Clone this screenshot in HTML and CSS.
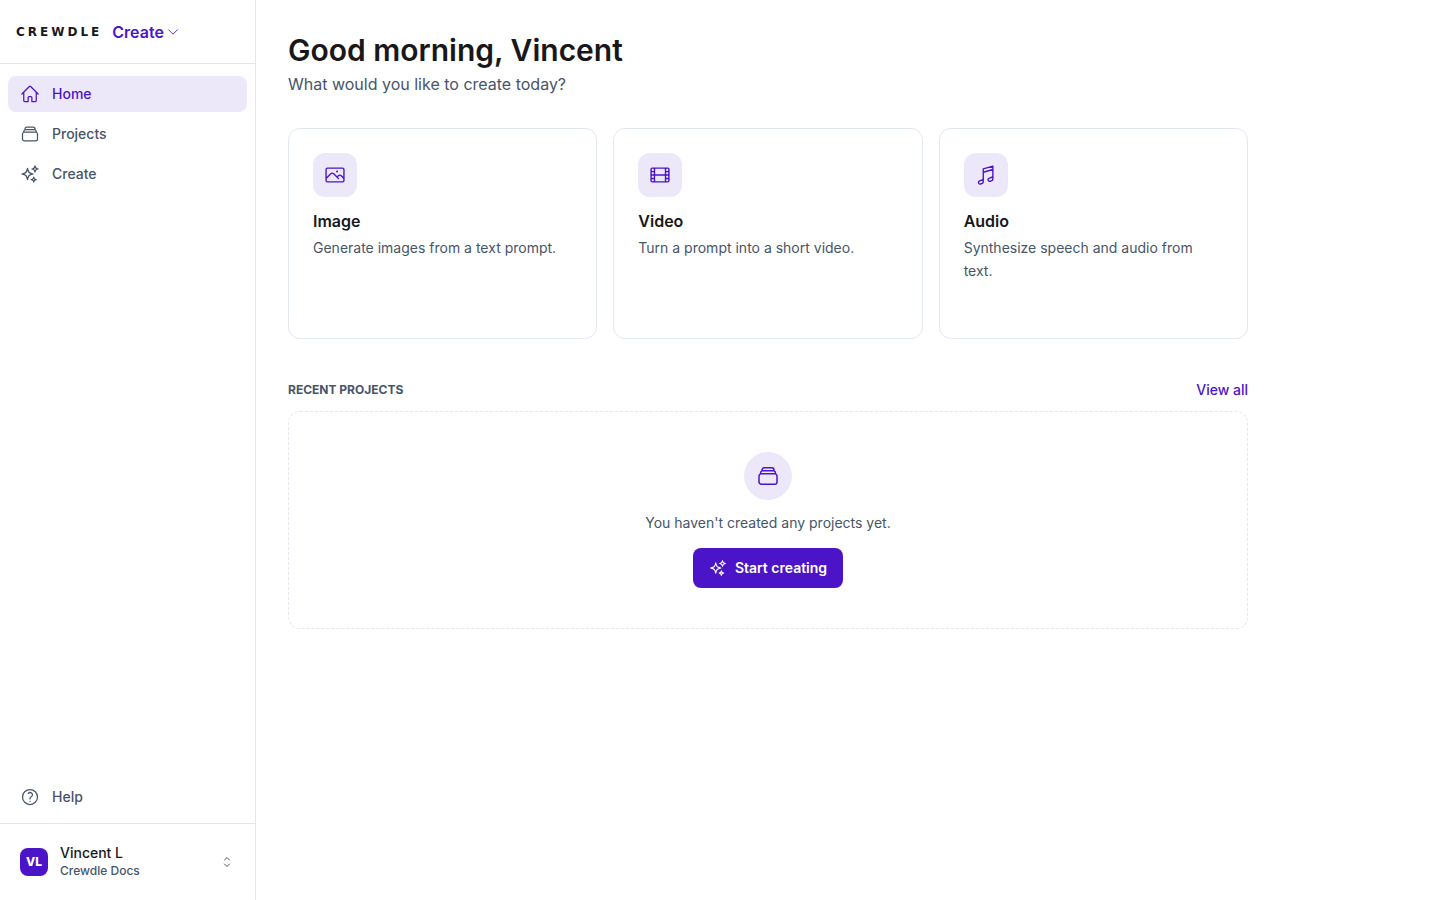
FILE: index.html
```html
<!DOCTYPE html>
<html lang="en">
<head>
<meta charset="utf-8">
<meta name="viewport" content="width=device-width, initial-scale=1">
<title>Crewdle Create</title>
<link rel="stylesheet" href="styles.css">
</head>
<body>

<svg class="sprite" aria-hidden="true">
  <symbol id="sparkles" viewBox="0 0 24 24">
    <path d="M9.813 15.904 9 18.75l-.813-2.846a4.5 4.5 0 0 0-3.09-3.09L2.25 12l2.846-.813a4.5 4.5 0 0 0 3.09-3.09L9 5.25l.813 2.846a4.5 4.5 0 0 0 3.09 3.09L15.75 12l-2.846.813a4.5 4.5 0 0 0-3.09 3.09ZM18.259 8.715 18 9.75l-.259-1.035a3.375 3.375 0 0 0-2.455-2.456L14.25 6l1.036-.259a3.375 3.375 0 0 0 2.455-2.456L18 2.25l.259 1.035a3.375 3.375 0 0 0 2.456 2.456L21.75 6l-1.035.259a3.375 3.375 0 0 0-2.456 2.456ZM16.894 20.567 16.5 21.75l-.394-1.183a2.25 2.25 0 0 0-1.423-1.423L13.5 18.75l1.183-.394a2.25 2.25 0 0 0 1.423-1.423l.394-1.183.394 1.183a2.25 2.25 0 0 0 1.423 1.423l1.183.394-1.183.394a2.25 2.25 0 0 0-1.423 1.423Z"/>
  </symbol>
  <symbol id="stack" viewBox="0 0 24 24">
    <path d="M6 6.878V6a2.25 2.25 0 0 1 2.25-2.25h7.5A2.25 2.25 0 0 1 18 6v.878m-12 0c.235-.083.487-.128.75-.128h10.5c.263 0 .515.045.75.128m-12 0A2.25 2.25 0 0 0 4.5 9v.878m13.5-3A2.25 2.25 0 0 1 19.5 9v.878m0 0a2.246 2.246 0 0 0-.75-.128H5.25c-.263 0-.515.045-.75.128m15 0A2.25 2.25 0 0 1 21 12v6a2.25 2.25 0 0 1-2.25 2.25H5.25A2.25 2.25 0 0 1 3 18v-6c0-.98.626-1.813 1.5-2.122"/>
  </symbol>
</svg>

<div class="app">
  <aside class="sidebar">
    <header class="brand">
      <button class="brand-button" type="button">
        <span class="wordmark">CREWDLE</span>
        <span class="product">Create</span>
        <svg class="icon chevron" viewBox="0 0 24 24"><path d="m19.5 8.25-7.5 7.5-7.5-7.5"/></svg>
      </button>
    </header>

    <nav class="nav">
      <a class="nav-item active" href="#home">
        <svg class="icon" viewBox="0 0 24 24"><path d="m2.25 12 8.954-8.955c.44-.439 1.152-.439 1.591 0L21.75 12M4.5 9.75v10.125c0 .621.504 1.125 1.125 1.125H9.75v-4.875c0-.621.504-1.125 1.125-1.125h2.25c.621 0 1.125.504 1.125 1.125V21h4.125c.621 0 1.125-.504 1.125-1.125V9.75"/></svg>
        Home
      </a>
      <a class="nav-item" href="#projects">
        <svg class="icon"><use href="#stack"/></svg>
        Projects
      </a>
      <a class="nav-item" href="#create">
        <svg class="icon"><use href="#sparkles"/></svg>
        Create
      </a>
      <a class="nav-item help" href="#help">
        <svg class="icon" viewBox="0 0 24 24"><path d="M9.879 7.519c1.171-1.025 3.071-1.025 4.242 0 1.172 1.025 1.172 2.687 0 3.712-.203.179-.43.326-.67.442-.745.361-1.45.999-1.45 1.827v.75M21 12a9 9 0 1 1-18 0 9 9 0 0 1 18 0Zm-9 5.25h.008v.008H12v-.008Z"/></svg>
        Help
      </a>
    </nav>

    <footer class="account">
      <button class="account-button" type="button">
        <span class="avatar">VL</span>
        <span class="account-text">
          <span class="account-name">Vincent L</span>
          <span class="account-org">Crewdle Docs</span>
        </span>
        <svg class="icon updown" viewBox="0 0 24 24"><path d="M8.25 15 12 18.75 15.75 15m-7.5-6L12 5.25 15.75 9"/></svg>
      </button>
    </footer>
  </aside>

  <main class="main">
    <div class="content">
      <h1>Good morning, Vincent</h1>
      <p class="subtitle">What would you like to create today?</p>

      <div class="cards">
        <a class="card" href="#image">
          <span class="card-icon">
            <svg class="icon" viewBox="0 0 24 24"><path d="m2.25 15.75 5.159-5.159a2.25 2.25 0 0 1 3.182 0l5.159 5.159m-1.5-1.5 1.409-1.409a2.25 2.25 0 0 1 3.182 0l2.909 2.909m-18 3.75h16.5a1.5 1.5 0 0 0 1.5-1.5V6a1.5 1.5 0 0 0-1.5-1.5H3.75A1.5 1.5 0 0 0 2.25 6v12a1.5 1.5 0 0 0 1.5 1.5Zm10.5-11.25h.008v.008h-.008V8.25Zm.375 0a.375.375 0 1 1-.75 0 .375.375 0 0 1 .75 0Z"/></svg>
          </span>
          <h2>Image</h2>
          <p>Generate images from a text prompt.</p>
        </a>
        <a class="card" href="#video">
          <span class="card-icon">
            <svg class="icon" viewBox="0 0 24 24"><path d="M3.375 19.5h17.25m-17.25 0a1.125 1.125 0 0 1-1.125-1.125M3.375 19.5h1.5C5.496 19.5 6 18.996 6 18.375m-3.75 0V5.625m0 12.75v-1.5c0-.621.504-1.125 1.125-1.125m18.375 2.625V5.625m0 12.75c0 .621-.504 1.125-1.125 1.125m1.125-1.125v-1.5c0-.621-.504-1.125-1.125-1.125m0 3.75h-1.5A1.125 1.125 0 0 1 18 18.375M20.625 4.5H3.375m17.25 0c.621 0 1.125.504 1.125 1.125M20.625 4.5h-1.5C18.504 4.5 18 5.004 18 5.625m3.75 0v1.5c0 .621-.504 1.125-1.125 1.125M3.375 4.5c-.621 0-1.125.504-1.125 1.125M3.375 4.5h1.5C5.496 4.5 6 5.004 6 5.625m-3.75 0v1.5c0 .621.504 1.125 1.125 1.125m0 0h1.5m-1.5 0c-.621 0-1.125.504-1.125 1.125v1.5c0 .621.504 1.125 1.125 1.125m1.5-3.75C5.496 8.25 6 7.746 6 7.125v-1.5M4.875 8.25C5.496 8.25 6 8.754 6 9.375v1.5m0-5.25v5.25m0-5.25C6 5.004 6.504 4.5 7.125 4.5h9.75c.621 0 1.125.504 1.125 1.125m1.125 2.625h1.5m-1.5 0A1.125 1.125 0 0 1 18 7.125v-1.5m1.125 2.625c-.621 0-1.125.504-1.125 1.125v1.5m2.625-2.625c.621 0 1.125.504 1.125 1.125v1.5c0 .621-.504 1.125-1.125 1.125M18 5.625v5.25M7.125 12h9.75m-9.75 0A1.125 1.125 0 0 1 6 10.875M7.125 12C6.504 12 6 12.504 6 13.125m0-2.25C6 11.496 5.496 12 4.875 12M18 10.875c0 .621-.504 1.125-1.125 1.125M18 10.875c0 .621.504 1.125 1.125 1.125m-2.25 0c.621 0 1.125.504 1.125 1.125m-12 5.25v-5.25m0 5.25c0 .621.504 1.125 1.125 1.125h9.75c.621 0 1.125-.504 1.125-1.125m-12 0v-1.5c0-.621-.504-1.125-1.125-1.125M18 18.375v-5.25m0 5.25v-1.5c0-.621.504-1.125 1.125-1.125M18 13.125v1.5c0 .621.504 1.125 1.125 1.125M18 13.125c0-.621.504-1.125 1.125-1.125M6 13.125v1.5c0 .621-.504 1.125-1.125 1.125M6 13.125C6 12.504 5.496 12 4.875 12m-1.5 0h1.5m-1.5 0c-.621 0-1.125.504-1.125 1.125v1.5c0 .621.504 1.125 1.125 1.125M19.125 12h1.5m0 0c.621 0 1.125.504 1.125 1.125v1.5c0 .621-.504 1.125-1.125 1.125m-17.25 0h1.5m14.25 0h1.5"/></svg>
          </span>
          <h2>Video</h2>
          <p>Turn a prompt into a short video.</p>
        </a>
        <a class="card" href="#audio">
          <span class="card-icon">
            <svg class="icon" viewBox="0 0 24 24"><path d="m9 9 10.5-3m0 6.553v3.75a2.25 2.25 0 0 1-1.632 2.163l-1.32.377a1.803 1.803 0 1 1-.99-3.467l2.31-.66a2.25 2.25 0 0 0 1.632-2.163Zm0 0V2.25L9 5.25v10.303m0 0v3.75a2.25 2.25 0 0 1-1.632 2.163l-1.32.377a1.803 1.803 0 0 1-.99-3.467l2.31-.66A2.25 2.25 0 0 0 9 15.553Z"/></svg>
          </span>
          <h2>Audio</h2>
          <p>Synthesize speech and audio from text.</p>
        </a>
      </div>

      <section class="recent">
        <div class="recent-head">
          <h2>RECENT PROJECTS</h2>
          <a href="#projects">View all</a>
        </div>
        <div class="empty">
          <span class="empty-icon"><svg class="icon"><use href="#stack"/></svg></span>
          <p>You haven't created any projects yet.</p>
          <button class="primary" type="button">
            <svg class="icon"><use href="#sparkles"/></svg>
            Start creating
          </button>
        </div>
      </section>
    </div>
  </main>
</div>

</body>
</html>
```
FILE: styles.css
```css
:root {
  --primary: #4b14c8;
  --tint: #ede8f9;
  --text: #18181b;
  --muted: #475569;
  --border: #e2e8f0;
}

* {
  box-sizing: border-box;
}

body {
  margin: 0;
  font-family: Inter, "Liberation Sans", sans-serif;
  font-size: 14px;
  line-height: 20px;
  color: var(--text);
  background: #fff;
}

h1, h2, p {
  margin: 0;
}

a {
  color: inherit;
  text-decoration: none;
}

button {
  font: inherit;
  color: inherit;
  background: none;
  border: 0;
  padding: 0;
  cursor: pointer;
}

.sprite {
  display: none;
}

.icon {
  flex: none;
  width: 20px;
  height: 20px;
  fill: none;
  stroke: currentColor;
  stroke-width: 1.5;
  stroke-linecap: round;
  stroke-linejoin: round;
}

.app {
  display: flex;
  min-height: 100vh;
}

/* sidebar */
.sidebar {
  display: flex;
  flex-direction: column;
  flex: none;
  width: 256px;
  border-right: 1px solid var(--border);
}

.brand {
  display: flex;
  align-items: center;
  height: 64px;
  padding: 0 16px;
  border-bottom: 1px solid var(--border);
}

.brand-button {
  display: flex;
  align-items: center;
}

.wordmark {
  font-family: "DejaVu Sans", sans-serif;
  font-size: 12px;
  font-weight: 700;
  letter-spacing: 3px;
  margin-right: 10px;
}

.product {
  font-size: 16px;
  font-weight: 600;
  color: var(--primary);
}

.chevron {
  width: 14px;
  height: 14px;
  margin-left: 2px;
  color: var(--primary);
}

.nav {
  display: flex;
  flex-direction: column;
  flex: 1;
  gap: 4px;
  padding: 12px 8px 8px;
}

.nav-item {
  display: flex;
  align-items: center;
  gap: 12px;
  height: 36px;
  padding: 0 12px;
  border-radius: 8px;
  font-weight: 500;
  color: var(--muted);
}

.nav-item.active {
  background: var(--tint);
  color: var(--primary);
}

.help {
  margin-top: auto;
}

.account {
  padding: 12px 8px;
  border-top: 1px solid var(--border);
}

.account-button {
  display: flex;
  align-items: center;
  gap: 12px;
  width: 100%;
  height: 52px;
  padding: 0 12px;
  text-align: left;
}

.avatar {
  display: grid;
  place-items: center;
  width: 28px;
  height: 28px;
  border-radius: 8px;
  background: var(--primary);
  color: #fff;
  font-size: 12px;
  font-weight: 800;
}

.account-text {
  display: flex;
  flex-direction: column;
  flex: 1;
}

.account-name {
  font-weight: 500;
  line-height: 18px;
}

.account-org {
  font-size: 12px;
  font-weight: 500;
  line-height: 18px;
  color: var(--muted);
}

.updown {
  width: 16px;
  height: 16px;
  color: var(--muted);
}

/* main column */
.main {
  flex: 1;
  min-width: 0;
  padding: 32px;
}

.content {
  max-width: 960px;
}

h1 {
  font-size: 30px;
  font-weight: 600;
  line-height: 36px;
}

.subtitle {
  margin-top: 4px;
  font-size: 16px;
  line-height: 24px;
  color: var(--muted);
}

.cards {
  display: grid;
  grid-template-columns: repeat(3, 1fr);
  gap: 16px;
  margin-top: 32px;
}

.card {
  min-height: 211px;
  padding: 24px;
  border: 1px solid var(--border);
  border-radius: 12px;
}

.card-icon {
  display: grid;
  place-items: center;
  width: 44px;
  height: 44px;
  border-radius: 12px;
  background: var(--tint);
  color: var(--primary);
}

.card-icon .icon {
  width: 22px;
  height: 22px;
}

.card h2 {
  margin-top: 12px;
  font-size: 16px;
  font-weight: 600;
  line-height: 24px;
}

.card p {
  margin-top: 3px;
  line-height: 23px;
  color: var(--muted);
}

.recent {
  margin-top: 41px;
}

.recent-head {
  display: flex;
  align-items: center;
  justify-content: space-between;
}

.recent-head h2 {
  font-size: 12px;
  font-weight: 700;
  color: var(--muted);
}

.recent-head a {
  font-weight: 500;
  color: var(--primary);
}

.empty {
  display: flex;
  flex-direction: column;
  align-items: center;
  margin-top: 11px;
  padding: 40px 24px;
  border: 1px dashed var(--border);
  border-radius: 12px;
}

.empty-icon {
  display: grid;
  place-items: center;
  width: 48px;
  height: 48px;
  border-radius: 50%;
  background: var(--tint);
  color: var(--primary);
}

.empty-icon .icon {
  width: 24px;
  height: 24px;
}

.empty p {
  margin: 12px 0 14px;
  line-height: 22px;
  color: var(--muted);
}

.primary {
  display: flex;
  align-items: center;
  gap: 8px;
  height: 40px;
  padding: 0 16px;
  border-radius: 8px;
  background: var(--primary);
  color: #fff;
  font-weight: 600;
}

.primary .icon {
  width: 18px;
  height: 18px;
}
```
